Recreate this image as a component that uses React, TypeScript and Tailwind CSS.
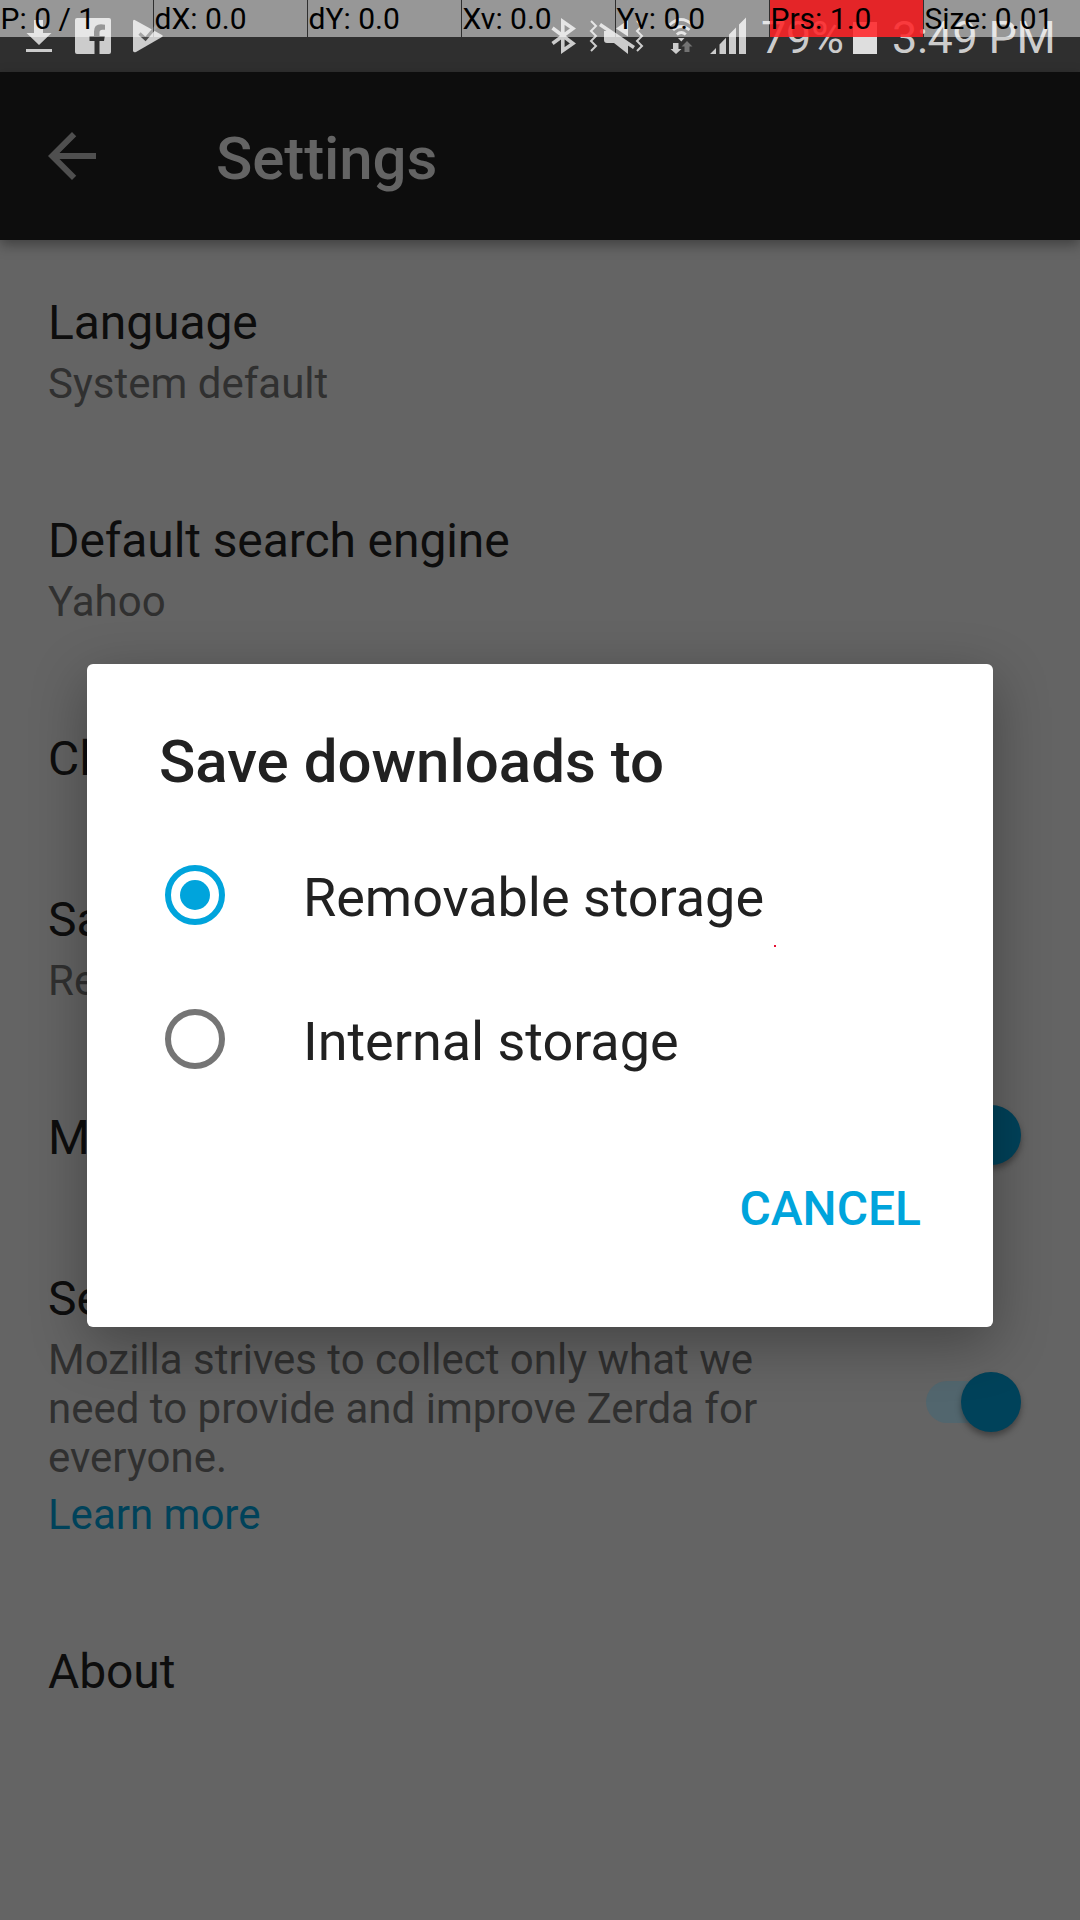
import type { ReactNode } from 'react';

const metrics = [
  { label: 'P: 0 / 1' },
  { label: 'dX: 0.0' },
  { label: 'dY: 0.0' },
  { label: 'Xv: 0.0' },
  { label: 'Yv: 0.0' },
  { label: 'Prs: 1.0', hot: true },
  { label: 'Size: 0.01' },
];

function PointerBar() {
  return (
    <div className="absolute inset-x-0 top-0 z-20 grid h-[37px] grid-cols-[repeat(6,153px)_1fr] gap-px text-[30px] leading-[37px] whitespace-nowrap text-black">
      {metrics.map((m) => (
        <div key={m.label} className={m.hot ? 'bg-[#ff2427]/87 pl-[0.5px]' : 'bg-white/50 pl-[0.5px]'}>
          {m.label}
        </div>
      ))}
    </div>
  );
}

function StatusBar() {
  return (
    <div className="flex h-[72px] items-start bg-[#2f2f2f] text-[#cccccc]">
      <svg className="ml-[26px] h-[72px] w-[26px]" viewBox="26 0 26 72" fill="currentColor">
        <path d="M34 20h9v13h8.500L39 45 26.500 33H34zM26 49h26v3H26z" />
      </svg>
      <svg className="ml-[23px] h-[72px] w-[36px]" viewBox="75 0 36 72" fill="currentColor">
        <path d="M77 18h32q2 0 2 2v32q0 2-2 2H99.500V41h4.500l.8-5h-5.300v-3.500q0-2.800 3-2.800h2.500v-5q-1.800-.4-4-.4-7 0-7 7.200V36h-4.500v5H94.500v13H77q-2 0-2-2V20q0-2 2-2z" />
      </svg>
      <svg className="ml-[22px] h-[72px] w-[30px]" viewBox="133 0 30 72">
        <path d="M133 21.500q0-2.500 2.200-1.300L162 35q1.500 1 0 1.900l-26 15q-3 1-3-1.500z" fill="currentColor" />
        <path d="M139.500 33.500l6 5.500 11-13" fill="none" stroke="#4b4b4b" strokeWidth="3.200" />
      </svg>

      <svg className="ml-[388px] h-[72px] w-[25px]" viewBox="551 0 25 72" fill="none" stroke="currentColor" strokeWidth="3.600">
        <path d="M552.500 28l20.500 15.500-10.200 7V21.500l10.200 7L552.500 43.500" />
      </svg>
      <svg className="ml-[13px] h-[72px] w-[56px]" viewBox="589 0 56 72">
        <path d="M591 21l5 5-5 5 5 5-5 5 5 5-5 5M637 21l5 5-5 5 5 5-5 5 5 5-5 5" fill="none" stroke="currentColor" strokeWidth="2" />
        <path d="M628 20v16.500l-12-8zM604 31h5l19 13v10l-14-11h-7q-3 0-3-3z" fill="currentColor" />
        <path d="M600 24.500l34 23" stroke="currentColor" strokeWidth="3.500" />
      </svg>
      <svg className="ml-[23px] h-[72px] w-[26px]" viewBox="668 0 26 72">
        <path d="M669.500 25q11.500-11 23 0M673 30q8-7 16.500 0M676.800 34.500q4.500-4 9 0" fill="none" stroke="currentColor" strokeWidth="2.800" />
        <path d="M678 38h6.500l-3.200 3.500zM673 43h5.500v6h3L676 54l-5.500-5h2.500z" fill="currentColor" />
        <path d="M687 41l5.500 5.500h-3V52h-5v-5.500h-3z" fill="#737373" />
      </svg>
      <svg className="ml-[16px] h-[72px] w-[36px]" viewBox="710 0 36 72" fill="currentColor">
        <path d="M710 54l6-6v6zM719.500 44.500l6.500-6.800V54h-6.500zM729 34.500l7-7V54h-7zM739 24.500l7-7V54h-7z" />
      </svg>
      <span className="ml-[15px] w-[92px] pt-[11px] text-[45px] leading-[53px] tracking-[-0.3px]">79%</span>
      <span className="mt-[22px] h-[32px] w-[24px] bg-[#dedede]" />
      <span className="ml-[15px] pt-[11px] text-[45px] leading-[53px] tracking-[-0.3px] whitespace-nowrap">3:49 PM</span>
    </div>
  );
}

function Toolbar() {
  return (
    <header className="relative flex h-[168px] items-center bg-[#0d0d0d] shadow-[0_5px_12px_rgba(0,0,0,0.35)]">
      <svg className="ml-[36px] size-[72px]" viewBox="0 0 24 24" fill="#4f4f4f">
        <path d="M20 11H7.830l5.590-5.590L12 4l-8 8 8 8 1.410-1.410L7.830 13H20v-2z" />
      </svg>
      <h1 className="ml-[108px] pt-[6px] text-[60px] leading-[70px] font-medium tracking-[-0.1px] text-[#646464]">Settings</h1>
    </header>
  );
}

function Toggle() {
  return (
    <div className="mb-px flex h-[60px] w-[96px] items-center">
      <div className="flex h-[42px] w-[90px] items-center rounded-full bg-[#52666e]">
        <span className="ml-[35px] size-[60px] shrink-0 rounded-full bg-[#00425a] shadow-[0_4px_6px_rgba(0,0,0,0.35)]" />
      </div>
    </div>
  );
}

type RowProps = { title: string; summary?: ReactNode; link?: string; toggle?: boolean };

function Row({ title, summary, link, toggle }: RowProps) {
  return (
    <div className="flex min-h-[161px] items-center justify-between py-[48px] pr-[58px] pl-[48px]">
      <div className="w-[740px] self-start whitespace-nowrap">
        <div className="h-[64px] pt-[6px] text-[48px] leading-[58px] tracking-[-0.1px] text-[#0d0d0d]">{title}</div>
        {summary && <div className="pt-[7px] pb-[2px] text-[42px] leading-[49px] text-[#303030]">{summary}</div>}
        {link && <div className="pt-[6px] pb-[2px] text-[42px] leading-[49px] text-[#00425a]">{link}</div>}
      </div>
      {toggle && <Toggle />}
    </div>
  );
}

function Option({ label, checked }: { label: string; checked?: boolean }) {
  return (
    <div className="flex h-[144px] items-center">
      <span
        className={
          checked
            ? 'flex size-[60px] items-center justify-center rounded-full border-6 border-[#00a4dc]'
            : 'size-[60px] rounded-full border-6 border-[#757575]'
        }
      >
        {checked && <span className="size-[30px] rounded-full bg-[#00a4dc]" />}
      </span>
      <span className="ml-[78px] pt-[6px] text-[54px] leading-[64px] tracking-[-0.04px] text-[#212121]">{label}</span>
    </div>
  );
}

function DownloadsDialog() {
  return (
    <div
      role="dialog"
      className="absolute top-[664px] left-[87px] z-10 h-[663px] w-[906px] rounded-[6px] bg-white shadow-[0_16px_56px_rgba(0,0,0,0.32)]"
    >
      <h2 className="pt-[63px] pl-[72px] text-[60px] leading-[70px] font-medium text-[#212121]">Save downloads to</h2>
      <div className="mt-[26px] pl-[78px]">
        <Option label="Removable storage" checked />
        <Option label="Internal storage" />
      </div>
      <div className="mt-[70px] flex justify-end pr-[72px] text-[48px] leading-[56px] font-medium text-[#00a4dc]">CANCEL</div>
      <span className="absolute top-[281px] left-[687px] size-[2px] bg-[#e60f32]" />
    </div>
  );
}

export default function App() {
  return (
    <div className="relative h-[1920px] w-[1080px] overflow-hidden bg-[#646464] font-['Roboto',sans-serif]">
      <PointerBar />
      <StatusBar />
      <Toolbar />
      <main>
        <Row title="Language" summary="System default" />
        <Row title="Default search engine" summary="Yahoo" />
        <Row title="Cl" />
        <Row title="Sa" summary="Re" />
        <Row title="M" toggle />
        <Row
          title="Se"
          summary={
            <>
              Mozilla strives to collect only what we
              <br />
              need to provide and improve Zerda for
              <br />
              everyone.
            </>
          }
          link="Learn more"
          toggle
        />
        <Row title="About" />
      </main>
      <DownloadsDialog />
    </div>
  );
}
